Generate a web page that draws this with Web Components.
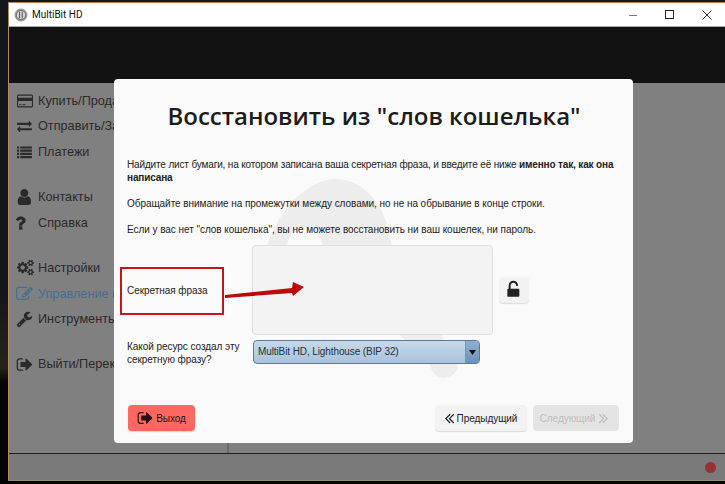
<!DOCTYPE html>
<html>
<head>
<meta charset="utf-8">
<style>
  html, body { margin: 0; height: 100%; overflow: hidden; background: linear-gradient(#15161a 60%, #27231b 76%, #030303 79%); }
  body { font-family: "Liberation Sans", sans-serif; }
</style>
</head>
<body>

<mb-window title="MultiBit HD">
  <mb-nav slot="nav" icon="card" size="16" label="Купить/Продать"></mb-nav>
  <mb-nav slot="nav" icon="exchange" size="16" label="Отправить/Запросить"></mb-nav>
  <mb-nav slot="nav" icon="list" size="16" label="Платежи" end></mb-nav>
  <mb-nav slot="nav" icon="user" size="20" label="Контакты"></mb-nav>
  <mb-nav slot="nav" icon="question" size="20" label="Справка" end></mb-nav>
  <mb-nav slot="nav" icon="cogs" size="17" label="Настройки"></mb-nav>
  <mb-nav slot="nav" icon="edit" size="18" label="Управление кошельком" active></mb-nav>
  <mb-nav slot="nav" icon="wrench" size="18" label="Инструменты" end></mb-nav>
  <mb-nav slot="nav" icon="signout" size="19" label="Выйти/Переключиться"></mb-nav>
  <mb-restore-dialog slot="dialog"></mb-restore-dialog>
</mb-window>

<script>
// font awesome 4 glyphs, 1792 box
const ICONS = {
  card: 'M1760 128q66 0 113 47t47 113v1216q0 66-47 113t-113 47h-1600q-66 0-113-47t-47-113v-1216q0-66 47-113t113-47h1600zm-1600 128q-13 0-22.500 9.500t-9.500 22.500v224h1664v-224q0-13-9.500-22.500t-22.500-9.500h-1600zm1600 1280q13 0 22.500-9.500t9.500-22.500v-608h-1664v608q0 13 9.500 22.500t22.500 9.500h1600zm-1504-128v-128h256v128h-256zm384 0v-128h384v128h-384z',
  exchange: 'M1792 1184v192q0 13-9.500 22.500t-22.500 9.500h-1376v192q0 13-9.500 22.500t-22.500 9.500q-12 0-24-10l-319-320q-9-9-9-22 0-14 9-23l320-320q9-9 23-9 13 0 22.500 9.500t9.500 22.500v192h1376q13 0 22.500 9.500t9.500 22.500zm0-544q0 14-9 23l-320 320q-9 9-23 9-13 0-22.500-9.500t-9.500-22.500v-192h-1376q-13 0-22.500-9.500t-9.500-22.500v-192q0-13 9.500-22.500t22.500-9.500h1376v-192q0-14 9-23t23-9q12 0 24 10l319 319q9 9 9 23z',
  list: 'M0 224h256v256h-256zM384 224h1408v256h-1408zM0 608h256v256h-256zM384 608h1408v256h-1408zM0 992h256v256h-256zM384 992h1408v256h-1408zM0 1376h256v256h-256zM384 1376h1408v256h-1408z',
  user: 'M1536 1399q0 109-62.500 187t-150.500 78h-854q-88 0-150.500-78t-62.500-187q0-85 8.500-160.500t31.500-152 58.500-131 94-89 134.500-34.500q131 128 313 128t313-128q76 0 134.500 34.500t94 89 58.500 131 31.500 152 8.500 160.500zm-256-887q0 159-112.500 271.500t-271.500 112.500-271.500-112.500-112.500-271.500 112.500-271.500 271.500-112.500 271.500 112.500 112.500 271.500z',
  question: 'M704 1256v240q0 16-12 28t-28 12h-240q-16 0-28-12t-12-28v-240q0-16 12-28t28-12h240q16 0 28 12t12 28zm316-600q0 54-15.500 101t-35 76.500-55 59.500-57.500 43.500-61 35.500q-41 23-68.500 65t-27.500 67q0 17-12 32.500t-28 15.500h-240q-15 0-25.500-18.500t-10.500-37.500v-45q0-83 65-156.500t143-108.500q59-27 84-56t25-76q0-42-46.500-74t-107.500-32q-65 0-108 29-35 25-107 115-13 16-31 16-12 0-25-8l-164-125q-13-10-15.500-25t5.500-28q160-266 464-266 80 0 161 31t146 83 106 127.500 41 158.500z',
  cogs: 'M896 896q0-106-75-181t-181-75-181 75-75 181 75 181 181 75 181-75 75-181zm768 512q0-52-38-90t-90-38-90 38-38 90q0 53 37.500 90.500t90.500 37.500 90.500-37.500 37.500-90.500zm0-1024q0-52-38-90t-90-38-90 38-38 90q0 53 37.500 90.500t90.500 37.500 90.500-37.500 37.500-90.500zm-384 421v185q0 10-7 19.500t-16 10.500l-155 24q-11 35-32 76 34 48 90 115 7 11 7 20 0 12-7 19-23 30-82.500 89.500t-78.500 59.500q-11 0-21-7l-115-90q-37 19-77 31-11 108-23 155-7 24-30 24h-186q-11 0-20-7.500t-10-17.500l-23-153q-34-10-75-31l-118 89q-7 7-20 7-11 0-21-8-144-133-144-160 0-9 7-19 10-14 41-53t47-61q-23-44-35-82l-152-24q-10-1-17-9.500t-7-19.500v-185q0-10 7-19.500t16-10.500l155-24q11-35 32-76-34-48-90-115-7-11-7-20 0-12 7-20 22-30 82-89t79-59q11 0 21 7l115 90q34-18 77-32 11-108 23-154 7-24 30-24h186q11 0 20 7.500t10 17.500l23 153q34 10 75 31l118-89q8-7 20-7 11 0 21 8 144 133 144 160 0 8-7 19-12 16-42 54t-45 60q23 48 34 82l152 23q10 2 17 10.500t7 19.500zm640 533v140q0 16-149 31-12 27-30 52 51 113 51 138 0 4-4 7-122 71-124 71-8 0-46-47t-52-68q-20 2-30 2t-30-2q-14 21-52 68t-46 47q-2 0-124-71-4-3-4-7 0-25 51-138-18-25-30-52-149-15-149-31v-140q0-16 149-31 13-29 30-52-51-113-51-138 0-4 4-7 4-2 35-20t59-34 30-16q8 0 46 46.500t52 67.500q20-2 30-2t30 2q51-71 92-112l6-2q4 0 124 70 4 3 4 7 0 25-51 138 17 23 30 52 149 15 149 31zm0-1024v140q0 16-149 31-12 27-30 52 51 113 51 138 0 4-4 7-122 71-124 71-8 0-46-47t-52-68q-20 2-30 2t-30-2q-14 21-52 68t-46 47q-2 0-124-71-4-3-4-7 0-25 51-138-18-25-30-52-149-15-149-31v-140q0-16 149-31 13-29 30-52-51-113-51-138 0-4 4-7 4-2 35-20t59-34 30-16q8 0 46 46.500t52 67.500q20-2 30-2t30 2q51-71 92-112l6-2q4 0 124 70 4 3 4 7 0 25-51 138 17 23 30 52 149 15 149 31z',
  edit: 'M888 1184l116-116-152-152-116 116v56h96v96h56zm440-720q-16-16-33 1l-350 350q-17 17-1 33t33-1l350-350q17-17 1-33zm80 594v190q0 119-84.500 203.500t-203.500 84.500h-832q-119 0-203.500-84.500t-84.500-203.500v-832q0-119 84.500-203.500t203.500-84.500h832q63 0 117 25 15 7 18 23 3 17-9 29l-49 49q-14 14-32 8-23-6-45-6h-832q-66 0-113 47t-47 113v832q0 66 47 113t113 47h832q66 0 113-47t47-113v-126q0-13 9-22l64-64q15-15 35-7t20 29zm-96-738l288 288-672 672h-288v-288zm444 132l-92 92-288-288 92-92q28-28 68-28t68 28l152 152q28 28 28 68t-28 68z',
  wrench: 'M448 1472q0-26-19-45t-45-19-45 19-19 45 19 45 45 19 45-19 19-45zm644-420l-682 682q-37 37-90 37-52 0-91-37l-106-108q-38-36-38-90 0-53 38-91l681-681q39 98 114.500 173.500t173.500 114.500zm634-435q0 39-23 106-47 134-164.500 217.500t-258.500 83.500q-185 0-316.500-131.500t-131.500-316.500 131.500-316.500 316.500-131.500q58 0 121.500 16.500t107.500 46.500q16 11 16 28t-16 28l-293 169v224l193 107q5-3 79-48.500t135.500-81 70.500-35.500q15 0 23.500 10t8.500 25z',
  signout: 'M704 1440q0 4 1 20t.5 26.500-3 23.500-10 19.500-20.500 6.500h-320q-119 0-203.500-84.500t-84.500-203.500v-704q0-119 84.500-203.500t203.500-84.500h320q13 0 22.500 9.500t9.500 22.500q0 4 1 20t.5 26.500-3 23.500-10 19.500-20.500 6.500h-320q-66 0-113 47t-47 113v704q0 66 47 113t113 47h312l11.500 1 11.500 3 8 5.500 7 9 2 13.500zm928-544q0 26-19 45l-544 544q-19 19-45 19t-45-19-19-45v-288h-448q-26 0-45-19t-19-45v-384q0-26 19-45t45-19h448v-288q0-26 19-45t45-19 45 19l544 544q19 19 19 45z',
  unlock: 'M1376 768q40 0 68 28t28 68v576q0 40-28 68t-68 28h-960q-40 0-68-28t-28-68v-576q0-40 28-68t68-28h32v-320q0-185 131.500-316.500t316.500-131.500 316.500 131.500 131.500 316.500q0 26-19 45t-45 19h-64q-26 0-45-19t-19-45q0-106-75-181t-181-75-181 75-75 181v320h736z',
  left: 'M1011 1376q0 13-10 23l-50 50q-10 10-23 10t-23-10l-466-466q-10-10-10-23t10-23l466-466q10-10 23-10t23 10l50 50q10 10 10 23t-10 23l-393 393 393 393q10 10 10 23zm384 0q0 13-10 23l-50 50q-10 10-23 10t-23-10l-466-466q-10-10-10-23t10-23l466-466q10-10 23-10t23 10l50 50q10 10 10 23t-10 23l-393 393 393 393q10 10 10 23z'
};

function glyph(name, size, extra) {
  return `<svg width="${size}" height="${size}" viewBox="0 0 1920 1792" fill="currentColor" ${extra || ''}><path d="${ICONS[name]}"/></svg>`;
}

class MbWindow extends HTMLElement {
  connectedCallback() {
    this.attachShadow({ mode: 'open' });
    this.shadowRoot.innerHTML = `
      <style>
        :host {
          display: flex;
          flex-direction: column;
          position: absolute;
          left: 8px; top: 2px; right: 0; bottom: 3px;
          border-left: 1px solid #b08a63;
          border-top: 1px solid #b08a63;
          border-bottom: 1px solid #a08a6c;
          background: #808080;
        }
        .title {
          height: 23px;
          background: #fff;
          border-bottom: 1px solid #a9a9a9;
          display: flex;
          align-items: center;
          padding-left: 5px;
          gap: 4px;
          font: 10px Roboto, sans-serif;
          color: #111;
        }
        .title .name { flex: 1; }
        .ctrl { width: 37px; height: 23px; margin-left: -4px; display: flex; align-items: center; justify-content: center; }
        .head { height: 56px; background: #121212; }
        .mid { flex: 1; display: flex; min-height: 0; background: #808080; }
        .nav { width: 218px; border-right: 2px solid #6b6b6b; overflow: hidden; padding-top: 5px; }
        .foot {
          height: 26px;
          border-top: 1px solid #1e1e1e;
          background: #7a7a7a;
          display: flex;
          justify-content: flex-end;
          align-items: center;
          padding-right: 9px;
        }
        .dot { width: 11px; height: 11px; border-radius: 50%; background: #983232; }
      </style>
      <div class="title">
        <svg width="14" height="14" viewBox="0 0 14 14"><circle cx="7" cy="7" r="6.5" fill="#9b9b9b"/><circle cx="7" cy="7" r="4.6" fill="#d5d5d5" stroke="#666" stroke-width=".8"/><path d="M5.600 3.500v7M8.200 3.500v7" stroke="#555" stroke-width="1"/></svg>
        <span class="name">${this.getAttribute('title')}</span>
        <div class="ctrl"><svg width="10" height="10"><path d="M1 5.500h8" stroke="#777" stroke-width="1"/></svg></div>
        <div class="ctrl"><svg width="10" height="10"><rect x=".5" y=".5" width="8" height="8" fill="none" stroke="#222"/></svg></div>
        <div class="ctrl"><svg width="10" height="10"><path d="M.5.500l9 9M9.500.500l-9 9" stroke="#333" stroke-width="1"/></svg></div>
      </div>
      <div class="head"></div>
      <div class="mid"><div class="nav"><slot name="nav"></slot></div></div>
      <div class="foot"><div class="dot"></div></div>
      <slot name="dialog"></slot>
    `;
  }
}

class MbNav extends HTMLElement {
  connectedCallback() {
    this.attachShadow({ mode: 'open' });
    const active = this.hasAttribute('active');
    this.shadowRoot.innerHTML = `
      <style>
        :host {
          display: flex;
          align-items: center;
          height: 25.600px;
          padding-left: 8px;
          gap: 5px;
          font: 12.700px "Liberation Sans", sans-serif;
          white-space: nowrap;
          color: ${active ? '#446f93' : '#2a2a2a'};
        }
        :host([end]) { margin-bottom: 19.600px; }
        .ic { flex: none; width: 16px; display: flex; justify-content: center; }
        .ic svg { flex: none; display: block; }
      </style>
      <span class="ic">${glyph(this.getAttribute('icon'), this.getAttribute('size'))}</span>
      <span>${this.getAttribute('label')}</span>
    `;
  }
}

class MbButton extends HTMLElement {
  connectedCallback() {
    this.attachShadow({ mode: 'open' });
    this.shadowRoot.innerHTML = `
      <style>
        :host {
          display: inline-flex;
          align-items: center;
          justify-content: center;
          box-sizing: border-box;
          height: 26px;
          gap: 2px;
          font: 10px "Liberation Sans", sans-serif;
          color: #222;
          background: #f2f2f2;
          border-radius: 4px;
          box-shadow: 0 1px 1px rgba(0,0,0,.12);
        }
        :host([kind=danger]) { background: #ff6862; color: #2a1212; }
        :host([kind=off]) { background: #e4e4e4; color: #bdbdbd; box-shadow: none; }
      </style>
      <slot></slot>
    `;
  }
}

class MbRestoreDialog extends HTMLElement {
  connectedCallback() {
    this.attachShadow({ mode: 'open' });
    this.shadowRoot.innerHTML = `
      <style>
        :host {
          display: flex;
          flex-direction: column;
          position: absolute;
          left: 105px; top: 76px;
          width: 519px; height: 364px;
          box-sizing: border-box;
          padding: 0 12px 0 13px;
          background: #fafafa;
          border-radius: 4px;
          overflow: hidden;
          font: 10px "Liberation Sans", sans-serif;
          letter-spacing: -0.05px;
          color: #222;
        }
        .layer { position: absolute; left: 0; top: 0; }
        h1 {
          position: relative;
          margin: 18px 0 0;
          text-align: center;
          font: 600 24px/38px "Open Sans", sans-serif;
          letter-spacing: 0;
          color: #1c1c1c;
        }
        .copy { position: relative; margin-top: 23px; }
        p { margin: 0 0 13px; line-height: 13px; }
        p.first { letter-spacing: -0.15px; }
        .form { position: relative; display: grid; grid-template-columns: 125px 241px 36px; margin-top: -4px; }
        .area { background: #f3f3f3; border: 1px solid #dedede; border-radius: 4px; box-sizing: border-box; width: 241px; height: 90px; }
        .lock { align-self: center; justify-self: end; width: 30px; }
        .secret { grid-row: 1; grid-column: 1; align-self: center; }
        .res { grid-column: 1; margin-top: 5px; line-height: 13px; padding-right: 4px; }
        .select {
          grid-column: 2 / span 2;
          margin: 5px 0 0 1px;
          width: 227px; height: 24px;
          box-sizing: border-box;
          display: flex;
          border: 1px solid #5e7893;
          border-radius: 4px;
          overflow: hidden;
          background: linear-gradient(#c6d9ea, #a9c3dc);
          letter-spacing: -0.1px;
          color: #25303b;
        }
        .select .v { flex: 1; padding-left: 4px; line-height: 22px; }
        .select .a {
          width: 13px;
          background: linear-gradient(#8fb0d0, #6d92b8);
          border-left: 1px solid #7a97b3;
          display: flex; align-items: center; justify-content: center;
        }
        .actions { position: relative; margin-top: auto; margin-bottom: 12px; display: flex; gap: 6px; padding: 0 2px 0 1px; }
        .actions .sp { flex: 1; }
        .exit { width: 67px; }
        .exit span { margin-left: -1px; }
        .prev { width: 92px; }
        .prev span { margin: 0 4px 0 -4px; }
        .next { width: 86px; }
        .next span { margin-right: -3px; }
        .note { position: absolute; left: 6px; top: 188px; width: 104px; height: 48px; box-sizing: border-box; border: 2px solid #c4161c; }
      </style>
      <svg class="layer" width="519" height="364" viewBox="114 79 519 364"><path fill="#ededed" d="M262 270C270 210 310 179 335 179C370 179 390 215 392 250L441 335L457 365C460 372 450 378 443 378C436 378 432 372 430 365L400 335L323 250C323 237 315 227 303 227C293 227 286 237 283 270Z"/></svg>
      <h1>Восстановить из "слов кошелька"</h1>
      <div class="copy">
        <p class="first">Найдите лист бумаги, на котором записана ваша секретная фраза, и введите её ниже <b>именно так, как она написана</b></p>
        <p>Обращайте внимание на промежутки между словами, но не на обрывание в конце строки.</p>
        <p>Если у вас нет "слов кошелька", вы не можете восстановить ни ваш кошелек, ни пароль.</p>
      </div>
      <div class="form">
        <div class="secret">Секретная фраза</div>
        <div class="area"></div>
        <mb-button class="lock">${glyph('unlock', 20)}</mb-button>
        <div class="res">Какой ресурс создал эту секретную фразу?</div>
        <div class="select"><span class="v">MultiBit HD, Lighthouse (BIP 32)</span><span class="a"><svg width="7" height="5"><path d="M0 0h7L3.500 5z" fill="#111"/></svg></span></div>
      </div>
      <div class="actions">
        <mb-button class="exit" kind="danger">${glyph('signout', 18)}<span>Выход</span></mb-button>
        <span class="sp"></span>
        <mb-button class="prev">${glyph('left', 18)}<span>Предыдущий</span></mb-button>
        <mb-button class="next" kind="off"><span>Следующий</span>${glyph('left', 18, 'style="transform:scaleX(-1)"')}</mb-button>
      </div>
      <div class="note"></div>
      <svg class="layer" width="519" height="364" viewBox="114 79 519 364"><path fill="#bb0a0a" d="M225 295L292 288L293 282L304 287L293 296L292 293L225 298Z"/></svg>
    `;
  }
}

customElements.define('mb-window', MbWindow);
customElements.define('mb-nav', MbNav);
customElements.define('mb-button', MbButton);
customElements.define('mb-restore-dialog', MbRestoreDialog);
</script>
</body>
</html>
